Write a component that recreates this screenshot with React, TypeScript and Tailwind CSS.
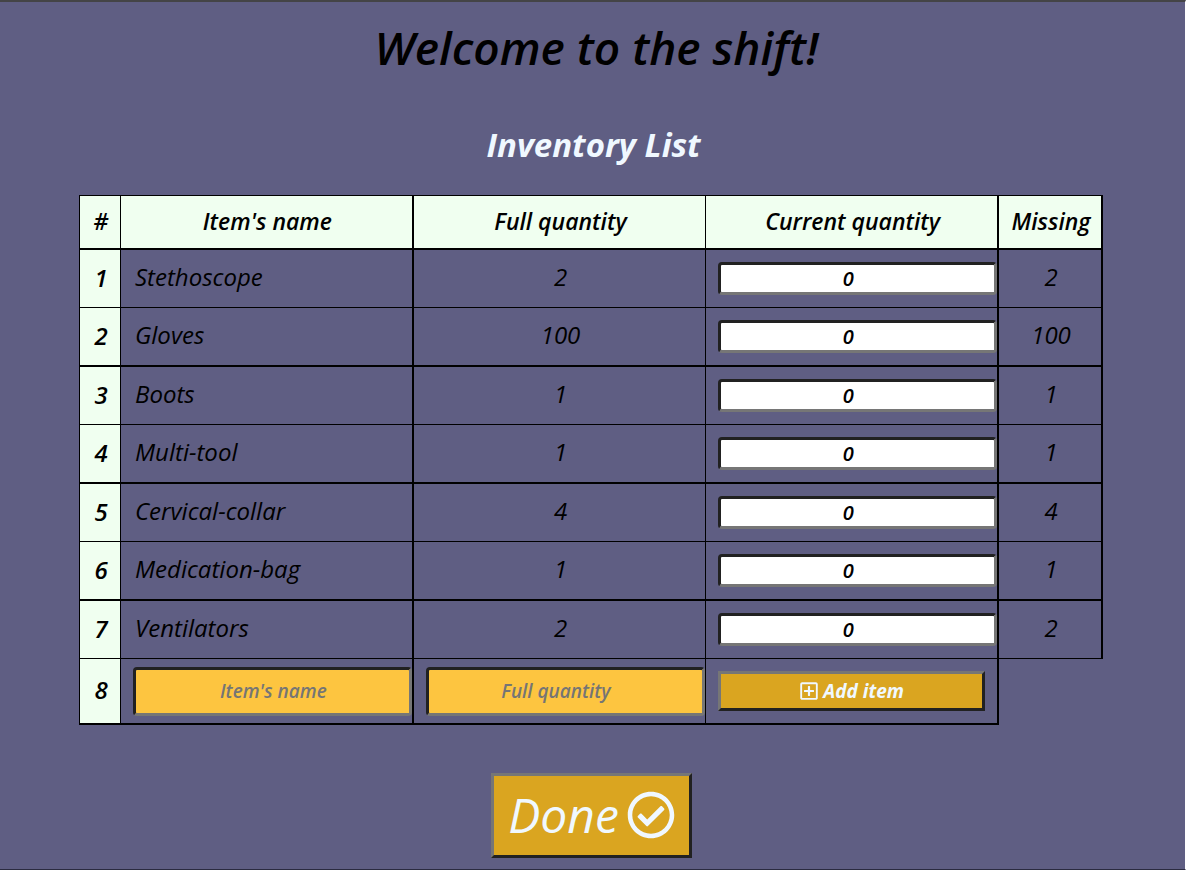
import { useState } from "react";
import type { FormEvent } from "react";
import { FaRegCheckCircle, FaRegPlusSquare } from "react-icons/fa";

interface Item {
  name: string;
  full: number;
  current: number;
}

const initialItems: Item[] = [
  { name: "Stethoscope", full: 2, current: 0 },
  { name: "Gloves", full: 100, current: 0 },
  { name: "Boots", full: 1, current: 0 },
  { name: "Multi-tool", full: 1, current: 0 },
  { name: "Cervical-collar", full: 4, current: 0 },
  { name: "Medication-bag", full: 1, current: 0 },
  { name: "Ventilators", full: 2, current: 0 },
];

const inset =
  "block w-full rounded-[4px] border-[3px] border-t-[#212121] border-l-[#212121] border-r-[#767676] border-b-[#767676] text-center font-semibold italic";
const outset =
  "border-[3px] border-t-[#767676] border-l-[#767676] border-r-[#212121] border-b-[#212121] bg-[#daa520] text-[#f0f8ff] italic";
const heading = "border-b-2 border-black bg-[#f0fff0] pb-0.5 pl-0.5 font-semibold";
const rowHeading = "border-r border-black bg-[#f0fff0] pb-0.5 pl-0.5 font-semibold";

export default function App() {
  const [items, setItems] = useState(initialItems);
  const [name, setName] = useState("");
  const [full, setFull] = useState("");

  const setCurrent = (index: number, current: number) =>
    setItems(items.map((item, i) => (i === index ? { ...item, current } : item)));

  const addItem = (event: FormEvent) => {
    event.preventDefault();
    if (!name || !full) return;
    setItems([...items, { name, full: Number(full), current: 0 }]);
    setName("");
    setFull("");
  };

  return (
    <main className="flex min-h-screen flex-col border-t-2 border-r border-b border-t-[#444446] border-r-white border-b-[#2b2b40] bg-[#5f5e83] font-['Open_Sans',sans-serif] text-black italic">
      <h1 className="mt-[15px] pl-2 text-center text-[46px] leading-[60px] font-semibold">
        Welcome to the shift!
      </h1>
      <h2 className="mt-[42px] pl-0.5 text-center text-[33px] leading-[52px] font-bold text-[#f0f8ff]">
        Inventory List
      </h2>

      <form onSubmit={addItem} className="mt-6 pr-[82px] pl-[79px]">
        <table className="w-full table-fixed border-separate border-spacing-0 border-t border-l border-black text-[24px] leading-8">
          <colgroup>
            <col className="w-[41px]" />
            <col />
            <col />
            <col />
            <col className="w-[104px]" />
          </colgroup>
          <thead>
            <tr className="h-[54px] text-[23px]">
              <th scope="col" className={`${heading} border-r`}>#</th>
              <th scope="col" className={`${heading} border-r-2`}>Item's name</th>
              <th scope="col" className={`${heading} border-r`}>Full quantity</th>
              <th scope="col" className={`${heading} border-r-2`}>Current quantity</th>
              <th scope="col" className={`${heading} border-r-2`}>Missing</th>
            </tr>
          </thead>
          <tbody>
            {items.map((item, i) => (
              <tr
                key={i}
                className="odd:h-[58px] even:h-[59px] [&:nth-child(even)>*]:border-b-2 [&:nth-child(odd)>*]:border-b"
              >
                <th scope="row" className={rowHeading}>{i + 1}</th>
                <td className="border-r-2 border-black pb-[3px] pl-[14px]">{item.name}</td>
                <td className="border-r border-black pb-[3px] pl-0.5 text-center">{item.full}</td>
                <td className="border-r-2 border-black pl-3">
                  <input
                    type="number"
                    aria-label={`Current quantity of ${item.name}`}
                    value={item.current}
                    onChange={(e) => setCurrent(i, Number(e.target.value))}
                    className={`${inset} h-[33px] bg-white pr-1 pb-px text-[20px]`}
                  />
                </td>
                <td className="border-r-2 border-black pb-[3px] pl-0.5 text-center">
                  {item.full - item.current}
                </td>
              </tr>
            ))}
            <tr className="h-[66px] *:border-b-2">
              <th scope="row" className={rowHeading}>{items.length + 1}</th>
              <td className="border-r-2 border-black pl-3">
                <input
                  type="text"
                  aria-label="Item's name"
                  placeholder="Item's name"
                  value={name}
                  onChange={(e) => setName(e.target.value)}
                  className={`${inset} h-[49px] bg-[#fdc540] pl-0.5 text-[19px] placeholder:text-[#757575]`}
                />
              </td>
              <td className="border-r border-black pl-3">
                <input
                  type="number"
                  aria-label="Full quantity"
                  placeholder="Full quantity"
                  value={full}
                  onChange={(e) => setFull(e.target.value)}
                  className={`${inset} h-[49px] bg-[#fdc540] pr-1 text-[19px] placeholder:text-[#757575]`}
                />
              </td>
              <td className="border-r-2 border-black px-3">
                <button
                  type="submit"
                  className={`${outset} flex h-10 w-full items-center justify-center gap-1 text-[19px] font-bold`}
                >
                  <FaRegPlusSquare className="size-5" />
                  Add item
                </button>
              </td>
            </tr>
          </tbody>
        </table>
      </form>

      <button
        type="button"
        className={`${outset} mt-12 mr-0.5 mb-2 flex h-[85px] items-center gap-2 self-center px-3.5 pb-0.5 text-[48px] leading-none`}
      >
        Done
        <FaRegCheckCircle className="size-12" />
      </button>
    </main>
  );
}
